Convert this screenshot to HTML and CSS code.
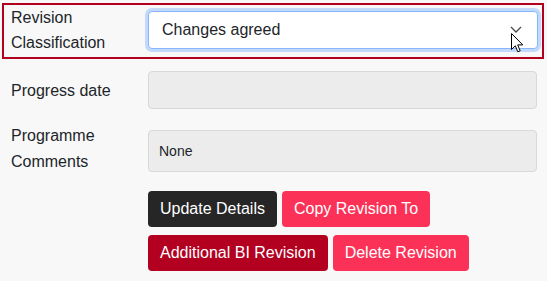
FILE: index.html
```html
<!DOCTYPE html>
<html lang="en">
<head>
<meta charset="utf-8">
<title>Revision</title>
<link rel="stylesheet" href="styles.css">
</head>
<body>
<div class="form">
  <div class="row row-highlight">
    <label class="lbl">Revision Classification</label>
    <div class="select">
      <span class="select-text">Changes agreed</span>
      <svg class="chev" width="12" height="7" viewBox="0 0 12 7"><path d="M1 1 L6 6 L11 1" fill="none" stroke="#4a4a4a" stroke-width="1.3"/></svg>
    </div>
  </div>
  <div class="row row-date">
    <label class="lbl">Progress date</label>
    <div class="input"></div>
  </div>
  <div class="row row-comments">
    <label class="lbl">Programme Comments</label>
    <div class="input input-text">None</div>
  </div>
  <div class="actions">
    <div class="btn-row">
      <button class="btn btn-dark">Update Details</button>
      <button class="btn btn-pink">Copy Revision To</button>
    </div>
    <div class="btn-row">
      <button class="btn btn-red">Additional BI Revision</button>
      <button class="btn btn-pink">Delete Revision</button>
    </div>
  </div>
</div>
<svg class="cursor" width="14" height="21" viewBox="0 0 14 21"><path d="M0.5 0.5 L0.5 16.5 L4.3 12.8 L6.8 18.8 L9.2 17.8 L6.7 11.9 L11.8 11.9 Z" fill="#fff" stroke="#000" stroke-width="1" stroke-linejoin="miter"/></svg>
</body>
</html>
```

FILE: styles.css
```css
html, body {
  margin: 0;
  padding: 0;
  background: #f8f8f8;
}
body {
  font-family: "Liberation Sans", Arial, sans-serif;
  font-size: 16px;
  color: #212529;
  position: relative;
  width: 547px;
  height: 281px;
  overflow: hidden;
}
.form {
  padding-top: 3px;
}
.row {
  display: grid;
  grid-template-columns: 137px 389px;
  align-items: center;
  padding-left: 11px;
}
.lbl {
  line-height: 25px;
  display: block;
}
.row-highlight {
  margin: 0 3px 0 2px;
  border: 2px solid #b3001f;
  padding: 0 4px 2px 7px;
  grid-template-columns: 137px 390px;
}
.select {
  height: 38px;
  box-sizing: border-box;
  border: 1px solid #86b7fe;
  border-radius: 4px;
  background: #fff;
  box-shadow: 0 0 0 3px #c2d9fc;
  display: flex;
  align-items: center;
  padding-left: 13px;
  position: relative;
}
.select-text {
  line-height: 24px;
}
.chev {
  position: absolute;
  right: 15px;
  top: 14px;
}
.row-date {
  margin-top: 12px;
}
.row-comments {
  margin-top: 14px;
  align-items: start;
}
.row-comments .lbl {
  line-height: 26px;
}
.row-comments .input {
  margin-top: 7px;
}
.input {
  height: 38px;
  box-sizing: border-box;
  border: 1px solid #d8d8d8;
  border-radius: 4px;
  background: #ececec;
}
.input-text {
  height: 42px;
  font-size: 14px;
  display: flex;
  align-items: center;
  padding-left: 10px;
  color: #212529;
}
.actions {
  padding-left: 148px;
  margin-top: 16px;
  display: flex;
  flex-direction: column;
  gap: 8px;
}
.btn-row {
  display: flex;
  gap: 5px;
}
.btn {
  font-family: "Liberation Sans", Arial, sans-serif;
  font-size: 16px;
  line-height: 24px;
  height: 36px;
  padding: 6px 12px;
  border: 0;
  border-radius: 4px;
  color: #fff;
}
.btn-dark {
  background: #262626;
  width: 129px;
}
.btn-pink {
  background: #fc3158;
}
.btn-red {
  background: #b30021;
}
.cursor {
  position: absolute;
  left: 511px;
  top: 33px;
}
```
